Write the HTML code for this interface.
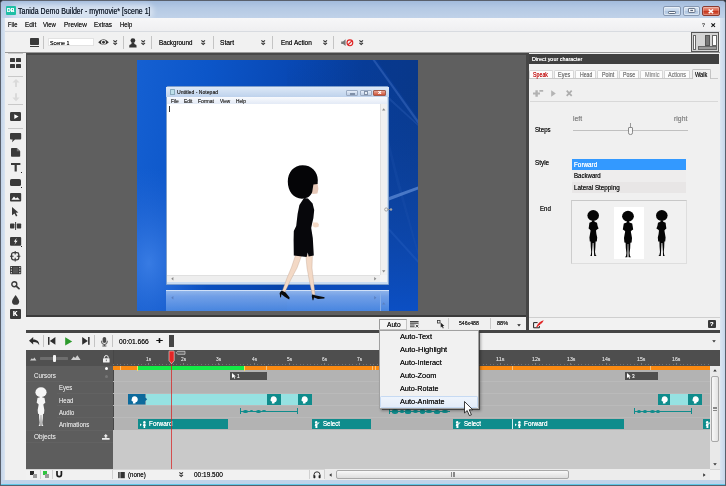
<!DOCTYPE html>
<html><head><meta charset="utf-8"><title>Tanida Demo Builder</title>
<style>
*{box-sizing:border-box;margin:0;padding:0}
html,body{width:726px;height:486px;overflow:hidden;background:#2e333b}
body{font-family:"Liberation Sans",sans-serif;font-size:8px;color:#222;position:relative}
.a{position:absolute;display:block}
.t{position:absolute;white-space:nowrap;line-height:1.15;display:block;transform-origin:0 0;text-shadow:0 0 0.4px currentColor}
svg{overflow:visible}
#w{position:absolute;left:0;top:0;width:726px;height:486px;will-change:transform}
</style></head><body><div id="w">
<div class="a" style="left:0.00px;top:0.00px;width:726.00px;height:486.00px;background:#c3d4e8;border:1px solid #59606c;border-radius:4px 4px 0 0"></div>
<div class="a" style="left:1.00px;top:1.00px;width:724.00px;height:17.00px;background:linear-gradient(#a2bbdc,#b4c9e4 40%,#c0d2e9);border-radius:3px 3px 0 0"></div>
<div class="a" style="left:14.00px;top:7.50px;width:136.00px;height:7.00px;background:rgba(255,255,255,0.42);border-radius:4px;box-shadow:0 0 5px 4px rgba(255,255,255,0.42)"></div>
<div class="a" style="left:1.00px;top:18.00px;width:4.00px;height:467.00px;background:linear-gradient(90deg,#c2d3e8,#d9e4f1);"></div>
<div class="a" style="left:720.00px;top:18.00px;width:5.00px;height:467.00px;background:linear-gradient(90deg,#dbe6f2,#c6d6ea);"></div>
<div class="a" style="left:1.00px;top:480.00px;width:724.00px;height:4.50px;background:#bfd3ea;"></div>
<div class="a" style="left:1.00px;top:484.30px;width:724.00px;height:0.90px;background:#5fc8e8;"></div>
<div class="a" style="left:5.00px;top:18.00px;width:715.00px;height:462.00px;background:#f0f0f0;"></div>
<div class="a" style="left:6.00px;top:6.20px;width:9.80px;height:9.10px;background:#1fbfa5;border-radius:1px"></div>
<span class="t" style="left:7.20px;top:7.77px;font-size:5.20px;transform:scaleX(0.9853);color:#fff;font-weight:bold;">DB</span>
<span class="t" style="left:18.30px;top:6.72px;font-size:8.20px;transform:scaleX(0.8564);color:#1e2836;">Tanida Demo Builder - mymovie* [scene 1]</span>
<div class="a" style="left:663.30px;top:6.20px;width:17.90px;height:9.50px;background:linear-gradient(#d9e5f3,#c3d5ea 48%,#b0c6e1 52%,#c0d3e9);border:0.7px solid #8698b2;border-radius:2px;box-shadow:inset 0 0 0 0.7px rgba(255,255,255,0.6)"></div>
<div class="a" style="left:668.20px;top:10.80px;width:7.80px;height:2.90px;background:#fff;border:0.8px solid #5a6a80;border-radius:1.2px"></div>
<div class="a" style="left:682.60px;top:6.20px;width:17.70px;height:9.50px;background:linear-gradient(#d9e5f3,#c3d5ea 48%,#b0c6e1 52%,#c0d3e9);border:0.7px solid #8698b2;border-radius:2px;box-shadow:inset 0 0 0 0.7px rgba(255,255,255,0.6)"></div>
<svg class="a" style="left:687.80px;top:8.30px;" width="7.4" height="4.9" viewBox="0 0 7.4 4.9"><rect x="0.45" y="0.45" width="6.5" height="4" rx="0.6" fill="#fff" stroke="#56657c" stroke-width="0.9"/><rect x="2.3" y="1.8" width="2.8" height="1.3" fill="#56657c"/></svg>
<div class="a" style="left:702.00px;top:6.20px;width:17.90px;height:9.50px;background:linear-gradient(#eaa190,#d9604a 45%,#c5341c 52%,#d8674c);border:0.7px solid #8a3a30;border-radius:2px;box-shadow:inset 0 0 0 0.7px rgba(255,255,255,0.35)"></div>
<svg class="a" style="left:708.00px;top:8.60px;" width="5.8" height="4.6" viewBox="0 0 5.8 4.6"><path d="M0.7 0.5 L5.1 4.1 M5.1 0.5 L0.7 4.1" stroke="#fff" stroke-width="1.5"/></svg>
<div class="a" style="left:5.00px;top:18.00px;width:715.00px;height:13.20px;background:linear-gradient(#f7f7f8,#efeff1);"></div>
<div class="a" style="left:5.00px;top:31.20px;width:715.00px;height:0.80px;background:#d8dbe0;"></div>
<span class="t" style="left:7.90px;top:21.45px;font-size:6.70px;transform:scaleX(0.8799);color:#2c2c2c;">File</span>
<span class="t" style="left:24.80px;top:21.45px;font-size:6.70px;transform:scaleX(0.9701);color:#2c2c2c;">Edit</span>
<span class="t" style="left:43.40px;top:21.45px;font-size:6.70px;transform:scaleX(0.8888);color:#2c2c2c;">View</span>
<span class="t" style="left:63.70px;top:21.45px;font-size:6.70px;transform:scaleX(0.9568);color:#2c2c2c;">Preview</span>
<span class="t" style="left:94.00px;top:21.45px;font-size:6.70px;transform:scaleX(0.9480);color:#2c2c2c;">Extras</span>
<span class="t" style="left:119.80px;top:21.45px;font-size:6.70px;transform:scaleX(0.8853);color:#2c2c2c;">Help</span>
<span class="t" style="left:701.80px;top:20.95px;font-size:6.20px;transform:scaleX(0.7921);color:#666;font-weight:bold;">?</span>
<svg class="a" style="left:711.00px;top:23.00px;" width="4.4" height="4.2" viewBox="0 0 4.4 4.2"><path d="M0.4 0.4 L4 3.8 M4 0.4 L0.4 3.8" stroke="#111" stroke-width="1.1"/></svg>
<div class="a" style="left:5.00px;top:32.00px;width:715.00px;height:20.60px;background:#f1f1f1;"></div>
<div class="a" style="left:5.00px;top:52.40px;width:715.00px;height:1.00px;background:#9a9a9a;"></div>
<div class="a" style="left:29.60px;top:37.60px;width:9.20px;height:7.00px;background:#3a3a3a;border-radius:0.8px"></div>
<div class="a" style="left:29.60px;top:45.80px;width:9.20px;height:1.10px;background:#3a3a3a;"></div>
<div class="a" style="left:42.70px;top:36.00px;width:0.80px;height:13.00px;background:#c4c4c4;"></div>
<div class="a" style="left:122.90px;top:36.00px;width:0.80px;height:13.00px;background:#c4c4c4;"></div>
<div class="a" style="left:150.60px;top:36.00px;width:0.80px;height:13.00px;background:#c4c4c4;"></div>
<div class="a" style="left:212.50px;top:36.00px;width:0.80px;height:13.00px;background:#c4c4c4;"></div>
<div class="a" style="left:272.40px;top:36.00px;width:0.80px;height:13.00px;background:#c4c4c4;"></div>
<div class="a" style="left:333.30px;top:36.00px;width:0.80px;height:13.00px;background:#c4c4c4;"></div>
<div class="a" style="left:47.60px;top:38.40px;width:46.90px;height:7.80px;background:#fff;border:1px solid #e2e2e2"></div>
<span class="t" style="left:49.60px;top:38.55px;font-size:6.20px;transform:scaleX(0.8527);color:#222;">Scene 1</span>
<svg class="a" style="left:97.50px;top:38.30px;" width="11" height="8.4" viewBox="0 0 11 8.4"><path d="M0.2 4.2 Q5.5 -1.6 10.8 4.2 Q5.5 10 0.2 4.2Z" fill="#333"/><circle cx="5.5" cy="4.2" r="2.5" fill="#f1f1f1"/><circle cx="5.5" cy="4.2" r="1.5" fill="#333"/></svg>
<svg class="a" style="left:113.10px;top:40.40px;" width="4.4" height="5.2" viewBox="0 0 4.4 5.2"><path d="M0.4 0.4 L2.2 2 L4 0.4 M0.4 2.9 L2.2 4.5 L4 2.9" stroke="#333" stroke-width="1.1" fill="none"/></svg>
<svg class="a" style="left:140.70px;top:40.40px;" width="4.4" height="5.2" viewBox="0 0 4.4 5.2"><path d="M0.4 0.4 L2.2 2 L4 0.4 M0.4 2.9 L2.2 4.5 L4 2.9" stroke="#333" stroke-width="1.1" fill="none"/></svg>
<svg class="a" style="left:200.50px;top:40.40px;" width="4.4" height="5.2" viewBox="0 0 4.4 5.2"><path d="M0.4 0.4 L2.2 2 L4 0.4 M0.4 2.9 L2.2 4.5 L4 2.9" stroke="#333" stroke-width="1.1" fill="none"/></svg>
<svg class="a" style="left:261.20px;top:40.40px;" width="4.4" height="5.2" viewBox="0 0 4.4 5.2"><path d="M0.4 0.4 L2.2 2 L4 0.4 M0.4 2.9 L2.2 4.5 L4 2.9" stroke="#333" stroke-width="1.1" fill="none"/></svg>
<svg class="a" style="left:322.50px;top:40.40px;" width="4.4" height="5.2" viewBox="0 0 4.4 5.2"><path d="M0.4 0.4 L2.2 2 L4 0.4 M0.4 2.9 L2.2 4.5 L4 2.9" stroke="#333" stroke-width="1.1" fill="none"/></svg>
<svg class="a" style="left:359.30px;top:40.40px;" width="4.4" height="5.2" viewBox="0 0 4.4 5.2"><path d="M0.4 0.4 L2.2 2 L4 0.4 M0.4 2.9 L2.2 4.5 L4 2.9" stroke="#333" stroke-width="1.1" fill="none"/></svg>
<svg class="a" style="left:129.00px;top:37.60px;" width="7.8" height="9.6" viewBox="0 0 7.8 9.6"><circle cx="3.9" cy="2.6" r="2.4" fill="#333"/><path d="M2.6 4.6 L5.2 4.6 L5.4 6 L7.4 7 L7.6 9.4 L0.2 9.4 L0.4 7 L2.4 6Z" fill="#333"/></svg>
<span class="t" style="left:158.80px;top:38.97px;font-size:6.60px;transform:scaleX(0.9510);color:#222;">Background</span>
<span class="t" style="left:219.80px;top:38.97px;font-size:6.60px;transform:scaleX(1.0188);color:#222;">Start</span>
<span class="t" style="left:280.60px;top:38.97px;font-size:6.60px;transform:scaleX(0.9760);color:#222;">End Action</span>
<svg class="a" style="left:341.20px;top:39.20px;" width="12.5" height="7.4" viewBox="0 0 12.5 7.4"><path d="M0.2 2.4 L2 2.4 L4.6 0.3 L4.6 7.1 L2 5 L0.2 5Z" fill="#777"/><circle cx="8.9" cy="3.8" r="2.9" fill="none" stroke="#e02020" stroke-width="1.1"/><path d="M6.9 5.8 L10.9 1.8" stroke="#e02020" stroke-width="1.1"/></svg>
<div class="a" style="left:690.60px;top:32.40px;width:28.40px;height:19.80px;background:#d4d4d4;border:1px solid #555"></div>
<div class="a" style="left:692.60px;top:34.60px;width:3.80px;height:15.40px;background:#fff;border:0.5px solid #666"></div>
<div class="a" style="left:698.00px;top:45.60px;width:19.00px;height:4.40px;background:#9a9a9a;border:0.5px solid #666"></div>
<div class="a" style="left:704.60px;top:34.60px;width:5.00px;height:11.00px;background:#777;border:0.5px solid #555"></div>
<div class="a" style="left:711.60px;top:34.60px;width:5.00px;height:11.00px;background:#fff;border:0.5px solid #666"></div>
<div class="a" style="left:8.00px;top:53.20px;width:14.50px;height:0.80px;background:#c8c8c8;"></div>
<div class="a" style="left:8.00px;top:75.50px;width:14.50px;height:0.80px;background:#c8c8c8;"></div>
<div class="a" style="left:8.00px;top:103.60px;width:14.50px;height:0.80px;background:#c8c8c8;"></div>
<div class="a" style="left:8.00px;top:128.30px;width:14.50px;height:0.80px;background:#c8c8c8;"></div>
<div class="a" style="left:9.60px;top:57.80px;width:5.30px;height:4.40px;background:#3a3a3a;border-radius:0.6px"></div>
<div class="a" style="left:16.00px;top:57.80px;width:5.30px;height:4.40px;background:#3a3a3a;border-radius:0.6px"></div>
<div class="a" style="left:9.60px;top:64.00px;width:5.30px;height:4.40px;background:#3a3a3a;border-radius:0.6px"></div>
<div class="a" style="left:16.00px;top:64.00px;width:5.30px;height:4.40px;background:#3a3a3a;border-radius:0.6px"></div>
<svg class="a" style="left:11.50px;top:78.60px;" width="8" height="8.2" viewBox="0 0 8 8.2"><path d="M4 0 L7.6 3.6 L5 3.6 L5 8 L3 8 L3 3.6 L0.4 3.6Z" fill="#dadada"/></svg>
<svg class="a" style="left:11.50px;top:92.80px;" width="8" height="8.2" viewBox="0 0 8 8.2"><path d="M4 8.2 L7.6 4.6 L5 4.6 L5 0.2 L3 0.2 L3 4.6 L0.4 4.6Z" fill="#dadada"/></svg>
<div class="a" style="left:9.70px;top:112.00px;width:11.60px;height:9.10px;background:#3a3a3a;border-radius:1.2px"></div>
<svg class="a" style="left:13.60px;top:114.00px;" width="5" height="5.2" viewBox="0 0 5 5.2"><path d="M0.3 0.2 L4.6 2.6 L0.3 5Z" fill="#fff"/></svg>
<svg class="a" style="left:10.00px;top:133.20px;" width="11.2" height="9.4" viewBox="0 0 11.2 9.4"><path d="M1 0 H10.2 Q11.2 0 11.2 1 V5.4 Q11.2 6.4 10.2 6.4 H5 L2 9.2 L2.6 6.4 H1 Q0 6.4 0 5.4 V1 Q0 0 1 0Z" fill="#3a3a3a"/></svg>
<svg class="a" style="left:11.00px;top:148.00px;" width="9.2" height="8.8" viewBox="0 0 9.2 8.8"><path d="M0.8 0 H5.8 L9.2 3.2 V8 Q9.2 8.8 8.4 8.8 H0.8 Q0 8.8 0 8 V0.8 Q0 0 0.8 0Z" fill="#3a3a3a"/><path d="M5.8 0 L5.8 3.2 L9.2 3.2" fill="#777"/></svg>
<svg class="a" style="left:11.00px;top:163.20px;" width="9.4" height="8.6" viewBox="0 0 9.4 8.6"><path d="M0 0 H9.4 V1.9 H5.8 V8.6 H3.6 V1.9 H0Z" fill="#3a3a3a"/></svg>
<div class="a" style="left:20.60px;top:171.60px;width:1.20px;height:1.20px;background:#222;"></div>
<div class="a" style="left:10.00px;top:178.50px;width:11.20px;height:7.70px;background:#3a3a3a;border-radius:1.6px"></div>
<div class="a" style="left:20.60px;top:187.00px;width:1.20px;height:1.20px;background:#222;"></div>
<svg class="a" style="left:10.00px;top:192.50px;" width="11.2" height="8.5" viewBox="0 0 11.2 8.5"><rect x="0" y="0" width="11.2" height="8.5" rx="1" fill="#3a3a3a"/><path d="M1.4 6.8 L4 3.6 L5.8 5.4 L7.4 4.2 L9.8 6.8Z" fill="#fff"/></svg>
<svg class="a" style="left:12.00px;top:207.40px;" width="6.6" height="9.4" viewBox="0 0 6.6 9.4"><path d="M0 0 L6.4 5.6 L3.8 5.8 L5.4 8.8 L4 9.4 L2.5 6.4 L0 8.2Z" fill="#3a3a3a"/></svg>
<svg class="a" style="left:10.00px;top:222.20px;" width="11.2" height="8" viewBox="0 0 11.2 8"><rect x="0" y="1.4" width="4.4" height="5.2" rx="0.8" fill="#3a3a3a"/><rect x="6.8" y="1.4" width="4.4" height="5.2" rx="0.8" fill="#3a3a3a"/><rect x="5.1" y="0" width="1" height="8" fill="#3a3a3a"/></svg>
<svg class="a" style="left:10.00px;top:236.60px;" width="11.2" height="8.8" viewBox="0 0 11.2 8.8"><rect x="0" y="0" width="11.2" height="8.8" rx="1" fill="#3a3a3a"/><path d="M6.6 1 L3.8 4.8 L5.6 4.8 L4.4 7.8 L7.6 3.8 L5.8 3.8Z" fill="#fff"/></svg>
<div class="a" style="left:20.60px;top:246.00px;width:1.20px;height:1.20px;background:#222;"></div>
<svg class="a" style="left:10.40px;top:250.60px;" width="10.4" height="10.4" viewBox="0 0 10.4 10.4"><rect x="1.6" y="1.6" width="7.2" height="7.2" rx="1.8" fill="none" stroke="#3a3a3a" stroke-width="1.3"/><path d="M5.2 0 V3.6 M5.2 6.8 V10.4 M0 5.2 H3.6 M6.8 5.2 H10.4" stroke="#3a3a3a" stroke-width="1.1"/></svg>
<svg class="a" style="left:10.00px;top:265.90px;" width="11.2" height="8.2" viewBox="0 0 11.2 8.2"><rect x="0" y="0" width="11.2" height="8.2" rx="0.8" fill="#3a3a3a"/><g fill="#ddd"><rect x="0.8" y="0.9" width="1.2" height="1.2"/><rect x="0.8" y="3.5" width="1.2" height="1.2"/><rect x="0.8" y="6.1" width="1.2" height="1.2"/><rect x="9.2" y="0.9" width="1.2" height="1.2"/><rect x="9.2" y="3.5" width="1.2" height="1.2"/><rect x="9.2" y="6.1" width="1.2" height="1.2"/></g><rect x="3" y="0.9" width="5.2" height="6.4" fill="#555"/></svg>
<svg class="a" style="left:11.00px;top:281.20px;" width="8.8" height="8.2" viewBox="0 0 8.8 8.2"><circle cx="3.3" cy="3.3" r="2.5" fill="none" stroke="#3a3a3a" stroke-width="1.4"/><path d="M5.2 5.2 L8 7.6" stroke="#3a3a3a" stroke-width="1.8" stroke-linecap="round"/></svg>
<svg class="a" style="left:12.00px;top:295.00px;" width="7.2" height="9.8" viewBox="0 0 7.2 9.8"><path d="M3.6 0 Q7.2 5 7.2 6.4 A3.6 3.4 0 0 1 0 6.4 Q0 5 3.6 0Z" fill="#3a3a3a"/></svg>
<div class="a" style="left:10.20px;top:309.20px;width:10.50px;height:9.80px;background:#3a3a3a;border-radius:1px"></div>
<span class="t" style="left:13.20px;top:310.21px;font-size:6.40px;transform:scaleX(0.9952);color:#fff;font-weight:bold;">K</span>
<div class="a" style="left:25.60px;top:53.40px;width:500.40px;height:263.60px;background:#5f5f5f;"></div>
<div class="a" style="left:25.60px;top:53.40px;width:500.40px;height:1.40px;background:#484848;"></div>
<div class="a" style="left:25.60px;top:53.40px;width:1.60px;height:263.60px;background:#4c4c4c;"></div>
<div class="a" style="left:25.60px;top:314.50px;width:500.40px;height:2.50px;background:#3b3b3b;"></div>
<div class="a" style="left:137.2px;top:60.3px;width:280.6px;height:250.4px;overflow:hidden;background:linear-gradient(100deg,#1560d2 0%,#0c56c9 22%,#0848b4 48%,#073c98 70%,#0a3a8c 100%)">
<svg class="a" style="left:0;top:0" width="281" height="251" viewBox="0 0 281 251"><defs><linearGradient id="g1" x1="0" y1="0" x2="0" y2="1"><stop offset="0" stop-color="#0a3a8c" stop-opacity="0.0"/><stop offset="0.55" stop-color="#0f49ae" stop-opacity="0.5"/><stop offset="1" stop-color="#0b4fc4" stop-opacity="1"/></linearGradient><radialGradient id="g2" cx="0.1" cy="0.75" r="0.5"><stop offset="0" stop-color="#3c7fe6" stop-opacity="0.9"/><stop offset="1" stop-color="#2a6ad8" stop-opacity="0"/></radialGradient></defs><rect x="0" y="60" width="120" height="191" fill="url(#g2)"/><rect x="150" y="0" width="131" height="251" fill="url(#g1)"/><path d="M238 0 L281 60 L281 64 L235.5 0Z" fill="#4a78cc" opacity="0.4"/><path d="M252 37 L281 64 L281 66 L252 40Z" fill="#3f6fc6" opacity="0.25"/><path d="M240 0 L281 0 L281 58Z" fill="#082f78" opacity="0.25"/><path d="M238 26 L262 120 L281 190 L281 196 L260 124 L236 26Z" fill="#2758b4" opacity="0.2"/><path d="M252 137 L281 126.5 L281 129.5 L252 140.5Z" fill="#7aa4e8" opacity="0.55"/><path d="M252 168 L281 200 L281 203 L252 171Z" fill="#2f66c8" opacity="0.3"/></svg>
</div>
<div class="a" style="left:165.50px;top:86.20px;width:223.80px;height:198.50px;background:#c9dcf2;border:0.6px solid #7f9fcb;border-radius:2px 2px 0 0"></div>
<div class="a" style="left:166.00px;top:86.80px;width:222.80px;height:10.20px;background:linear-gradient(#dde9f7,#bed2ec);"></div>
<div class="a" style="left:167.40px;top:97.00px;width:220.00px;height:7.40px;background:linear-gradient(#f8fafd,#e3eaf6);"></div>
<div class="a" style="left:167.40px;top:104.40px;width:220.00px;height:178.00px;background:#fff;"></div>
<div class="a" style="left:379.60px;top:104.40px;width:7.80px;height:178.00px;background:#f0f0f0;border-left:0.5px solid #e0e0e0"></div>
<div class="a" style="left:167.40px;top:275.00px;width:212.60px;height:7.40px;background:#eeeeee;border-top:0.5px solid #e0e0e0"></div>
<div class="a" style="left:379.60px;top:275.00px;width:7.80px;height:7.40px;background:#f4f4f4;"></div>
<span class="t" style="left:176.80px;top:89.87px;font-size:5.20px;transform:scaleX(0.9830);color:#333;">Untitled - Notepad</span>
<div class="a" style="left:170.40px;top:89.40px;width:4.20px;height:5.60px;background:#bfe0ea;border:0.4px solid #8ab;border-radius:0.5px"></div>
<span class="t" style="left:170.60px;top:98.66px;font-size:4.80px;transform:scaleX(1.0084);color:#3a3a3a;">File</span>
<span class="t" style="left:184.00px;top:98.66px;font-size:4.80px;transform:scaleX(1.0156);color:#3a3a3a;">Edit</span>
<span class="t" style="left:198.00px;top:98.66px;font-size:4.80px;transform:scaleX(1.0525);color:#3a3a3a;">Format</span>
<span class="t" style="left:219.60px;top:98.66px;font-size:4.80px;transform:scaleX(0.9886);color:#3a3a3a;">View</span>
<span class="t" style="left:235.60px;top:98.66px;font-size:4.80px;transform:scaleX(1.0129);color:#3a3a3a;">Help</span>
<div class="a" style="left:169.20px;top:106.40px;width:0.40px;height:5.20px;background:#333;"></div>
<div class="a" style="left:346.00px;top:89.70px;width:12.40px;height:6.30px;background:linear-gradient(#e6eef9,#bccde5);border:0.5px solid #9aaac2;border-radius:1px"></div>
<div class="a" style="left:350.00px;top:93.00px;width:4.60px;height:1.80px;background:#f4f6fa;border:0.4px solid #8090a8"></div>
<div class="a" style="left:359.60px;top:89.70px;width:12.40px;height:6.30px;background:linear-gradient(#e6eef9,#bccde5);border:0.5px solid #9aaac2;border-radius:1px"></div>
<div class="a" style="left:363.60px;top:91.40px;width:4.40px;height:3.40px;background:#e8eef6;border:0.6px solid #8090a8"></div>
<div class="a" style="left:373.00px;top:89.70px;width:13.00px;height:6.30px;background:linear-gradient(#eaa897,#cf5238);border:0.5px solid #a05a4c;border-radius:1px"></div>
<span class="t" style="left:378.00px;top:89.52px;font-size:5.00px;transform:scaleX(1.2226);color:#fff;font-weight:bold;">x</span>
<svg class="a" style="left:381.60px;top:108.00px;" width="3.4" height="2.6" viewBox="0 0 3.4 2.6"><path d="M0 2.4 L1.7 0.2 L3.4 2.4Z" fill="#8a8a8a"/></svg>
<svg class="a" style="left:381.60px;top:270.00px;" width="3.4" height="2.6" viewBox="0 0 3.4 2.6"><path d="M0 0.2 L1.7 2.4 L3.4 0.2Z" fill="#8a8a8a"/></svg>
<svg class="a" style="left:170.60px;top:277.40px;" width="2.6" height="3.4" viewBox="0 0 2.6 3.4"><path d="M2.4 0 L0.2 1.7 L2.4 3.4Z" fill="#8a8a8a"/></svg>
<svg class="a" style="left:374.00px;top:277.40px;" width="2.6" height="3.4" viewBox="0 0 2.6 3.4"><path d="M0.2 0 L2.4 1.7 L0.2 3.4Z" fill="#8a8a8a"/></svg>
<div class="a" style="left:165.50px;top:289.50px;width:223.80px;height:21.20px;background:linear-gradient(#9fc0ee,#7aa6ea 30%,#4d8ae2 100%);opacity:0.92"></div>
<div class="a" style="left:165.50px;top:289.50px;width:223.80px;height:0.80px;background:#cfe0f8;"></div>
<div class="a" style="left:379.60px;top:291.00px;width:0.60px;height:19.70px;background:#86aee8;"></div>
<svg class="a" style="left:170.60px;top:295.60px;" width="2.6" height="3.4" viewBox="0 0 2.6 3.4"><path d="M2.4 0 L0.2 1.7 L2.4 3.4Z" fill="#5b80c0"/></svg>
<svg class="a" style="left:374.00px;top:295.60px;" width="2.6" height="3.4" viewBox="0 0 2.6 3.4"><path d="M0.2 0 L2.4 1.7 L0.2 3.4Z" fill="#5b80c0"/></svg>
<svg class="a" style="left:381.60px;top:302.00px;" width="3.4" height="2.6" viewBox="0 0 3.4 2.6"><path d="M0 2.4 L1.7 0.2 L3.4 2.4Z" fill="#5b80c0"/></svg>
<svg class="a" style="left:383.50px;top:206.60px;" width="9" height="5" viewBox="0 0 9 5"><circle cx="2.2" cy="2.5" r="1.6" fill="none" stroke="#888" stroke-width="0.7"/><path d="M3.8 2.5 H8.4" stroke="#888" stroke-width="0.9"/><rect x="6.2" y="1.3" width="1.6" height="2.4" fill="#aaa"/></svg>
<svg class="a" style="left:270px;top:155px" width="70" height="150" viewBox="270 155 70 150"><path d="M295.6 255 L301.6 255.6 L297 268 L290.6 280 L285 292 L282.2 291.4 L286.6 279 L291.6 267Z" fill="#f3d9c6" stroke="#b99a86" stroke-width="0.35"/><path d="M305.8 255 L312.4 255 L312 268 L313.6 282 L315 294.6 L312.4 295 L309.6 282 L307 268Z" fill="#f3d9c6" stroke="#b99a86" stroke-width="0.35"/><path d="M281.6 290.6 L285.6 292.4 L289.6 297.6 L289.2 299.6 L285 297 L281.4 294.2 L281 297.4 L280.2 297.2 L279.6 293Z" fill="#0a0a0a"/><path d="M312 294.6 L316 295.4 L321 296.4 L324.6 297.2 L324.4 298.6 L318 299 L314 297.6 L313.4 300.2 L312.6 300.2 L311.8 296.6Z" fill="#0a0a0a"/><path d="M304 198 L308 198.4 L312.6 203.6 L314.2 210 L313.4 218 L312 224 L311.2 228 L312.8 238 L313.8 255.6 L308.6 256.4 L307.8 252.6 L306.6 257 L293.8 255.4 L293.6 240 L293.8 231 L296.2 226 L297.6 214 L299.4 205 Z" fill="#07070b"/><path d="M313 222.4 L317.4 222.6 L319 224.6 L318.4 227 L315 227.4 L312.6 226Z" fill="#f3d9c6"/><path d="M311 182 L317.6 183.6 L318.4 189 L317.4 193.4 L313 194 L310 192Z" fill="#e6c8b8"/><path d="M302.6 165.2 C311.5 165.2 317.8 171.5 317.8 180 L317.6 184 L313.4 184.6 L312.2 192 C310.5 196.8 306.5 198.7 302 198.7 C293.5 198.7 287.8 191.2 287.8 181.6 C287.8 172 294 165.2 302.6 165.2Z" fill="#050507"/></svg>
<div class="a" style="left:526.00px;top:53.40px;width:2.60px;height:279.20px;background:#454545;"></div>
<div class="a" style="left:528.60px;top:53.40px;width:191.40px;height:276.80px;background:#f0f0f0;"></div>
<div class="a" style="left:528.60px;top:54.20px;width:190.60px;height:9.40px;background:#404040;"></div>
<span class="t" style="left:532.40px;top:55.05px;font-size:6.20px;transform:scaleX(0.8759);color:#fff;">Direct your character</span>
<div class="a" style="left:529.00px;top:78.10px;width:189.40px;height:0.60px;background:#c9c9c9;"></div>
<div class="a" style="left:529.40px;top:69.90px;width:23.60px;height:8.50px;background:#fdfdfd;border:1px solid #d6d6d6;border-bottom:none;border-radius:1.5px 1.5px 0 0"></div>
<span class="t" style="left:533.00px;top:70.59px;font-size:6.50px;transform:scaleX(0.8138);color:#c62020;">Speak</span>
<div class="a" style="left:554.00px;top:69.90px;width:20.40px;height:8.50px;background:#fdfdfd;border:1px solid #d6d6d6;border-bottom:none;border-radius:1.5px 1.5px 0 0"></div>
<span class="t" style="left:558.00px;top:70.59px;font-size:6.50px;transform:scaleX(0.8581);color:#7c7c7c;">Eyes</span>
<div class="a" style="left:575.20px;top:69.90px;width:21.20px;height:8.50px;background:#fdfdfd;border:1px solid #d6d6d6;border-bottom:none;border-radius:1.5px 1.5px 0 0"></div>
<span class="t" style="left:579.70px;top:70.59px;font-size:6.50px;transform:scaleX(0.7915);color:#7c7c7c;">Head</span>
<div class="a" style="left:597.40px;top:69.90px;width:20.80px;height:8.50px;background:#fdfdfd;border:1px solid #d6d6d6;border-bottom:none;border-radius:1.5px 1.5px 0 0"></div>
<span class="t" style="left:601.80px;top:70.59px;font-size:6.50px;transform:scaleX(0.8234);color:#7c7c7c;">Point</span>
<div class="a" style="left:619.20px;top:69.90px;width:20.20px;height:8.50px;background:#fdfdfd;border:1px solid #d6d6d6;border-bottom:none;border-radius:1.5px 1.5px 0 0"></div>
<span class="t" style="left:623.20px;top:70.59px;font-size:6.50px;transform:scaleX(0.8167);color:#7c7c7c;">Pose</span>
<div class="a" style="left:640.40px;top:69.90px;width:22.60px;height:8.50px;background:#fdfdfd;border:1px solid #d6d6d6;border-bottom:none;border-radius:1.5px 1.5px 0 0"></div>
<span class="t" style="left:644.50px;top:70.59px;font-size:6.50px;transform:scaleX(0.8545);color:#9a9a9a;">Mimic</span>
<div class="a" style="left:664.00px;top:69.90px;width:26.40px;height:8.50px;background:#fdfdfd;border:1px solid #d6d6d6;border-bottom:none;border-radius:1.5px 1.5px 0 0"></div>
<span class="t" style="left:668.40px;top:70.59px;font-size:6.50px;transform:scaleX(0.8397);color:#8a8a8a;">Actions</span>
<div class="a" style="left:691.80px;top:69.20px;width:19.20px;height:9.80px;background:#f0f0f0;border:0.6px solid #c4c4c4;border-bottom:none;border-radius:1.5px 1.5px 0 0"></div>
<span class="t" style="left:695.00px;top:70.61px;font-size:6.40px;transform:scaleX(0.8795);color:#2a2a2a;">Walk</span>
<svg class="a" style="left:533.00px;top:90.00px;" width="10.4" height="6.8" viewBox="0 0 10.4 6.8"><path d="M0 2.4 H2.4 V0.2 H4.8 V2.4 H7 V4.6 H4.8 V6.8 H2.4 V4.6 H0Z M6.4 0 H10.2 V1.7 H6.4Z" fill="#b2b2b2"/></svg>
<svg class="a" style="left:551.20px;top:90.00px;" width="5" height="7" viewBox="0 0 5 7"><path d="M0.2 0.2 L4.8 3.5 L0.2 6.8Z" fill="#b4b4b4"/></svg>
<svg class="a" style="left:565.80px;top:90.20px;" width="6.4" height="6.5" viewBox="0 0 6.4 6.5"><path d="M0.7 0.7 L5.7 5.8 M5.7 0.7 L0.7 5.8" stroke="#adadad" stroke-width="1.7"/></svg>
<div class="a" style="left:530.00px;top:100.60px;width:188.40px;height:1.20px;background:#d8d8d8;"></div>
<span class="t" style="left:573.30px;top:115.37px;font-size:6.60px;transform:scaleX(1.0449);color:#8a8a8a;">left</span>
<span class="t" style="left:673.60px;top:115.37px;font-size:6.60px;transform:scaleX(1.0436);color:#8a8a8a;">right</span>
<span class="t" style="left:535.30px;top:126.27px;font-size:6.60px;transform:scaleX(0.9302);color:#222;">Steps</span>
<div class="a" style="left:573.30px;top:130.30px;width:114.70px;height:0.80px;background:#c0c0c0;"></div>
<div class="a" style="left:630.10px;top:122.60px;width:0.60px;height:5.00px;background:#999;"></div>
<div class="a" style="left:628.10px;top:127.20px;width:4.70px;height:7.80px;background:#f6f6f6;border:0.7px solid #8a8a8a;border-radius:1px 1px 2.2px 2.2px"></div>
<span class="t" style="left:535.30px;top:158.67px;font-size:6.60px;transform:scaleX(0.9609);color:#222;">Style</span>
<div class="a" style="left:571.90px;top:158.90px;width:114.40px;height:11.00px;background:#3399ff;"></div>
<div class="a" style="left:571.90px;top:169.90px;width:114.40px;height:12.10px;background:#eeeded;"></div>
<div class="a" style="left:571.90px;top:182.00px;width:114.40px;height:11.30px;background:#e8e6e6;"></div>
<span class="t" style="left:573.90px;top:160.81px;font-size:6.40px;transform:scaleX(0.9926);color:#fff;">Forward</span>
<span class="t" style="left:573.90px;top:172.41px;font-size:6.40px;transform:scaleX(0.9537);color:#222;">Backward</span>
<span class="t" style="left:573.60px;top:184.31px;font-size:6.40px;transform:scaleX(0.9804);color:#222;">Lateral Stepping</span>
<span class="t" style="left:540.40px;top:204.77px;font-size:6.60px;transform:scaleX(0.9281);color:#222;">End</span>
<div class="a" style="left:571.30px;top:200.20px;width:115.90px;height:63.40px;background:#f1f1f1;border:0.7px solid #dedede;border-top-color:#c8c8c8;border-left-color:#cdcdcd"></div>
<div class="a" style="left:613.80px;top:206.60px;width:29.80px;height:52.90px;background:#fff;"></div>
<svg class="a" style="left:580.6px;top:208px" width="24" height="52" viewBox="-12 0 24 52"><g transform="scale(1,1)"><ellipse cx="0.2" cy="7.4" rx="5.8" ry="5.3" fill="#050505"/><path d="M-0.8 12.2 L1.2 12.2 L1.6 13.8 L4 14.8 L4.6 18 L5.6 20.4 L4 21.6 L3 22.6 L3.4 26 L4.2 29.4 L3.8 33.4 L2.6 33.6 L2.4 39 L2 44 L2.6 47 L3.6 48 L1.2 48.1 L0.9 43 L0.5 35 L-0.3 35 L-0.9 43 L-1 48.1 L-2.8 48 L-2.2 47 L-1.8 44 L-2.2 39 L-2.4 33.6 L-3.2 33.4 L-3.6 29.4 L-3 26 L-2.4 22.6 L-3.2 21.6 L-4.4 20.4 L-4 18 L-3.6 14.8 L-1.2 13.8Z" fill="#050505"/></g></svg>
<svg class="a" style="left:615.5px;top:208px" width="24" height="52" viewBox="-12 0 24 52"><ellipse cx="0" cy="8.2" rx="5.9" ry="5.4" fill="#050505"/><path d="M-1 13 L1 13 L1.4 14.6 L4.2 15.6 L4.8 19 L5.2 21.4 L3.6 22.4 L2.8 23.4 L3.4 26.6 L4 30 L3.6 34.6 L2.4 34.8 L2.2 40 L1.6 45 L2 48 L3 49.2 L0.6 49.3 L0.5 44 L0.3 36 L-0.3 36 L-0.5 44 L-0.6 49.3 L-3 49.2 L-2 48 L-1.6 45 L-2.2 40 L-2.4 34.8 L-3.6 34.6 L-4 30 L-3.4 26.6 L-2.8 23.4 L-3.6 22.4 L-5.2 21.4 L-4.8 19 L-4.2 15.6 L-1.4 14.6Z" fill="#050505"/></svg>
<svg class="a" style="left:649.8px;top:208px" width="24" height="52" viewBox="-12 0 24 52"><g transform="scale(-1,1)"><ellipse cx="0.2" cy="7.4" rx="5.8" ry="5.3" fill="#050505"/><path d="M-0.8 12.2 L1.2 12.2 L1.6 13.8 L4 14.8 L4.6 18 L5.6 20.4 L4 21.6 L3 22.6 L3.4 26 L4.2 29.4 L3.8 33.4 L2.6 33.6 L2.4 39 L2 44 L2.6 47 L3.6 48 L1.2 48.1 L0.9 43 L0.5 35 L-0.3 35 L-0.9 43 L-1 48.1 L-2.8 48 L-2.2 47 L-1.8 44 L-2.2 39 L-2.4 33.6 L-3.2 33.4 L-3.6 29.4 L-3 26 L-2.4 22.6 L-3.2 21.6 L-4.4 20.4 L-4 18 L-3.6 14.8 L-1.2 13.8Z" fill="#050505"/></g></svg>
<div class="a" style="left:528.60px;top:316.80px;width:191.40px;height:0.70px;background:#cfcfcf;"></div>
<div class="a" style="left:528.60px;top:317.50px;width:191.40px;height:12.70px;background:#f2f2f2;"></div>
<svg class="a" style="left:532.60px;top:319.80px;" width="11.2" height="8.4" viewBox="0 0 11.2 8.4"><path d="M0.6 2.6 H4.6 M0.6 2.6 V7.8 H6.4 V6" stroke="#222" stroke-width="1" fill="none"/><path d="M10.8 0.2 C8 0.6 5 3 3.2 7 L4.2 7.4 C5.4 5.6 6.4 5 7.6 4.8 L7 4 C8.6 3.8 9.6 2.6 10.8 0.2Z" fill="#e02424"/></svg>
<div class="a" style="left:707.60px;top:319.80px;width:8.80px;height:8.60px;background:#3a3a3a;border-radius:1px"></div>
<span class="t" style="left:710.20px;top:320.90px;font-size:6.00px;transform:scaleX(0.9822);color:#fff;font-weight:bold;">?</span>
<div class="a" style="left:25.60px;top:330.20px;width:694.40px;height:2.40px;background:#454545;"></div>
<div class="a" style="left:25.60px;top:317.00px;width:500.40px;height:13.20px;background:#f0f0f0;"></div>
<div class="a" style="left:378.70px;top:319.20px;width:28.50px;height:11.00px;background:#f4f4f4;border:0.7px solid #c4c4c4;border-top-color:#9a9a9a;border-left-color:#9a9a9a"></div>
<span class="t" style="left:386.90px;top:320.69px;font-size:6.50px;transform:scaleX(1.0171);color:#222;">Auto</span>
<svg class="a" style="left:409.80px;top:320.60px;" width="9" height="6.6" viewBox="0 0 9 6.6"><path d="M0 0.6 H8.6 M0 2.3 H8.6 M0 4 H4.6 M0 5.7 H4.6" stroke="#444" stroke-width="1.1"/><path d="M5.8 3.8 L8.4 6.4 M8.4 3.8 L5.8 6.4" stroke="#333" stroke-width="0.9"/></svg>
<svg class="a" style="left:437.00px;top:320.40px;" width="8" height="8.6" viewBox="0 0 8 8.6"><rect x="0.4" y="0.4" width="2.6" height="2.6" fill="none" stroke="#333" stroke-width="0.8"/><path d="M3.6 2.6 L7.4 6 L5.8 6.1 L6.7 8 L5.9 8.4 L5 6.5 L3.8 7.6Z" fill="#222"/></svg>
<div class="a" style="left:447.90px;top:318.40px;width:0.70px;height:11.00px;background:#c8c8c8;"></div>
<span class="t" style="left:459.00px;top:320.44px;font-size:5.80px;transform:scaleX(0.8897);color:#222;">546x488</span>
<div class="a" style="left:490.20px;top:318.40px;width:0.70px;height:11.00px;background:#c8c8c8;"></div>
<span class="t" style="left:497.20px;top:320.44px;font-size:5.80px;transform:scaleX(0.9562);color:#222;">88%</span>
<svg class="a" style="left:517.20px;top:323.70px;" width="4" height="2.6" viewBox="0 0 4 2.6"><path d="M0.2 0.2 L2 2.4 L3.8 0.2Z" fill="#222"/></svg>
<div class="a" style="left:25.60px;top:332.60px;width:694.40px;height:16.90px;background:#f0f0f0;"></div>
<svg class="a" style="left:29.40px;top:337.20px;" width="10.6" height="8.4" viewBox="0 0 10.6 8.4"><path d="M4.2 0 L4.2 2.4 C8.4 2.4 10.4 4.6 10.2 8.2 C9.2 5.8 7.6 5 4.2 5 L4.2 7.4 L0 3.7Z" fill="#2e2e2e"/></svg>
<div class="a" style="left:43.20px;top:335.00px;width:0.80px;height:12.40px;background:#c4c4c4;"></div>
<div class="a" style="left:94.00px;top:335.00px;width:0.80px;height:12.40px;background:#c4c4c4;"></div>
<div class="a" style="left:111.90px;top:335.00px;width:0.80px;height:12.40px;background:#c4c4c4;"></div>
<svg class="a" style="left:48.00px;top:337.40px;" width="7.6" height="7.8" viewBox="0 0 7.6 7.8"><rect x="0" y="0" width="1.5" height="7.8" fill="#2e2e2e"/><path d="M7.4 0 L7.4 7.8 L1.8 3.9Z" fill="#2e2e2e"/></svg>
<svg class="a" style="left:65.40px;top:337.00px;" width="7.4" height="8.8" viewBox="0 0 7.4 8.8"><path d="M0.2 0.2 L7.2 4.4 L0.2 8.6Z" fill="#2c9a2c"/></svg>
<svg class="a" style="left:82.00px;top:337.40px;" width="7.6" height="7.8" viewBox="0 0 7.6 7.8"><rect x="6.1" y="0" width="1.5" height="7.8" fill="#2e2e2e"/><path d="M0.2 0 L0.2 7.8 L5.8 3.9Z" fill="#2e2e2e"/></svg>
<svg class="a" style="left:101.40px;top:336.80px;" width="6.8" height="9.4" viewBox="0 0 6.8 9.4"><rect x="1.6" y="0" width="3.6" height="6" rx="1.8" fill="#4a4a4a"/><path d="M0.5 3.8 V4.6 A2.9 2.9 0 0 0 6.3 4.6 V3.8 M3.4 7.6 V9 M1.4 9 H5.4" stroke="#4a4a4a" stroke-width="1" fill="none"/></svg>
<span class="t" style="left:119.20px;top:337.53px;font-size:6.30px;transform:scaleX(1.0632);color:#222;">00:01.666</span>
<span class="t" style="left:156.40px;top:335.32px;font-size:9.60px;transform:scaleX(1.2486);color:#111;font-weight:bold;">+</span>
<div class="a" style="left:168.90px;top:335.40px;width:4.90px;height:11.40px;background:#454545;"></div>
<svg class="a" style="left:711.80px;top:340.20px;" width="4" height="2.6" viewBox="0 0 4 2.6"><path d="M0.2 0.2 L2 2.4 L3.8 0.2Z" fill="#333"/></svg>
<div class="a" style="left:25.60px;top:349.50px;width:694.40px;height:119.30px;background:#b3b3b3;"></div>
<div class="a" style="left:25.60px;top:349.50px;width:694.40px;height:16.10px;background:#4e4e4e;"></div>
<div class="a" style="left:25.60px;top:365.60px;width:87.20px;height:103.20px;background:#5d5d5d;"></div>
<div class="a" style="left:25.60px;top:349.50px;width:87.20px;height:16.10px;background:#505050;"></div>
<div class="a" style="left:112.60px;top:349.50px;width:0.60px;height:119.30px;background:#474747;"></div>
<div class="a" style="left:113.20px;top:430.40px;width:596.60px;height:38.40px;background:#c9c9c9;"></div>
<div class="a" style="left:113.20px;top:381.25px;width:596.60px;height:0.70px;background:#bababa;"></div>
<div class="a" style="left:113.20px;top:393.05px;width:596.60px;height:0.70px;background:#bababa;"></div>
<div class="a" style="left:113.20px;top:405.45px;width:596.60px;height:0.70px;background:#bababa;"></div>
<div class="a" style="left:113.20px;top:417.25px;width:596.60px;height:0.70px;background:#bababa;"></div>
<div class="a" style="left:26.00px;top:381.05px;width:86.60px;height:0.70px;background:#626262;"></div>
<div class="a" style="left:57.00px;top:393.05px;width:55.60px;height:0.70px;background:#626262;"></div>
<div class="a" style="left:57.00px;top:405.25px;width:55.60px;height:0.70px;background:#626262;"></div>
<div class="a" style="left:57.00px;top:417.25px;width:55.60px;height:0.70px;background:#626262;"></div>
<div class="a" style="left:26.00px;top:429.85px;width:86.60px;height:0.70px;background:#626262;"></div>
<div class="a" style="left:26.00px;top:442.05px;width:86.60px;height:0.70px;background:#626262;"></div>
<div class="a" style="left:113.20px;top:365.80px;width:596.60px;height:4.70px;background:#fa8a12;"></div>
<div class="a" style="left:137.20px;top:365.80px;width:107.60px;height:4.70px;background:#14ea46;"></div>
<div class="a" style="left:119.70px;top:366.40px;width:0.60px;height:3.80px;background:#f8c27a;"></div>
<div class="a" style="left:265.50px;top:366.40px;width:0.60px;height:3.80px;background:#f8c27a;"></div>
<div class="a" style="left:371.50px;top:366.40px;width:0.60px;height:3.80px;background:#f8c27a;"></div>
<div class="a" style="left:374.50px;top:366.40px;width:0.60px;height:3.80px;background:#f8c27a;"></div>
<div class="a" style="left:512.40px;top:366.40px;width:0.60px;height:3.80px;background:#f8c27a;"></div>
<div class="a" style="left:650.20px;top:366.40px;width:0.60px;height:3.80px;background:#f8c27a;"></div>
<div class="a" style="left:136.80px;top:366.00px;width:0.80px;height:4.60px;background:#f4e060;"></div>
<div class="a" style="left:244.40px;top:366.00px;width:0.80px;height:4.60px;background:#f4e060;"></div>
<span class="t" style="left:145.90px;top:356.11px;font-size:5.50px;transform:scaleX(0.8780);color:#d2d2d2;">1s</span>
<span class="t" style="left:181.10px;top:356.11px;font-size:5.50px;transform:scaleX(0.8780);color:#d2d2d2;">2s</span>
<span class="t" style="left:216.30px;top:356.11px;font-size:5.50px;transform:scaleX(0.8780);color:#d2d2d2;">3s</span>
<span class="t" style="left:251.50px;top:356.11px;font-size:5.50px;transform:scaleX(0.8780);color:#d2d2d2;">4s</span>
<span class="t" style="left:286.70px;top:356.11px;font-size:5.50px;transform:scaleX(0.8780);color:#d2d2d2;">5s</span>
<span class="t" style="left:321.90px;top:356.11px;font-size:5.50px;transform:scaleX(0.8780);color:#d2d2d2;">6s</span>
<span class="t" style="left:357.10px;top:356.11px;font-size:5.50px;transform:scaleX(0.8780);color:#d2d2d2;">7s</span>
<span class="t" style="left:392.30px;top:356.11px;font-size:5.50px;transform:scaleX(0.8780);color:#d2d2d2;">8s</span>
<span class="t" style="left:427.50px;top:356.11px;font-size:5.50px;transform:scaleX(0.8780);color:#d2d2d2;">9s</span>
<span class="t" style="left:461.10px;top:356.11px;font-size:5.50px;transform:scaleX(0.9472);color:#d2d2d2;">10s</span>
<span class="t" style="left:496.30px;top:356.11px;font-size:5.50px;transform:scaleX(0.9929);color:#d2d2d2;">11s</span>
<span class="t" style="left:531.50px;top:356.11px;font-size:5.50px;transform:scaleX(0.9472);color:#d2d2d2;">12s</span>
<span class="t" style="left:566.70px;top:356.11px;font-size:5.50px;transform:scaleX(0.9472);color:#d2d2d2;">13s</span>
<span class="t" style="left:601.90px;top:356.11px;font-size:5.50px;transform:scaleX(0.9472);color:#d2d2d2;">14s</span>
<span class="t" style="left:637.10px;top:356.11px;font-size:5.50px;transform:scaleX(0.9472);color:#d2d2d2;">15s</span>
<span class="t" style="left:672.30px;top:356.11px;font-size:5.50px;transform:scaleX(0.9472);color:#d2d2d2;">16s</span>
<div class="a" style="left:112.80px;top:364.00px;width:597.00px;height:1.40px;background:repeating-linear-gradient(90deg,#747474 0,#747474 1px,rgba(0,0,0,0) 1px,rgba(0,0,0,0) 3.52px);"></div>
<div class="a" style="left:148.00px;top:362.80px;width:1.00px;height:2.60px;background:#7e7e7e;"></div>
<div class="a" style="left:183.20px;top:362.80px;width:1.00px;height:2.60px;background:#7e7e7e;"></div>
<div class="a" style="left:218.40px;top:362.80px;width:1.00px;height:2.60px;background:#7e7e7e;"></div>
<div class="a" style="left:253.60px;top:362.80px;width:1.00px;height:2.60px;background:#7e7e7e;"></div>
<div class="a" style="left:288.80px;top:362.80px;width:1.00px;height:2.60px;background:#7e7e7e;"></div>
<div class="a" style="left:324.00px;top:362.80px;width:1.00px;height:2.60px;background:#7e7e7e;"></div>
<div class="a" style="left:359.20px;top:362.80px;width:1.00px;height:2.60px;background:#7e7e7e;"></div>
<div class="a" style="left:394.40px;top:362.80px;width:1.00px;height:2.60px;background:#7e7e7e;"></div>
<div class="a" style="left:429.60px;top:362.80px;width:1.00px;height:2.60px;background:#7e7e7e;"></div>
<div class="a" style="left:464.80px;top:362.80px;width:1.00px;height:2.60px;background:#7e7e7e;"></div>
<div class="a" style="left:500.00px;top:362.80px;width:1.00px;height:2.60px;background:#7e7e7e;"></div>
<div class="a" style="left:535.20px;top:362.80px;width:1.00px;height:2.60px;background:#7e7e7e;"></div>
<div class="a" style="left:570.40px;top:362.80px;width:1.00px;height:2.60px;background:#7e7e7e;"></div>
<div class="a" style="left:605.60px;top:362.80px;width:1.00px;height:2.60px;background:#7e7e7e;"></div>
<div class="a" style="left:640.80px;top:362.80px;width:1.00px;height:2.60px;background:#7e7e7e;"></div>
<div class="a" style="left:676.00px;top:362.80px;width:1.00px;height:2.60px;background:#7e7e7e;"></div>
<svg class="a" style="left:30.00px;top:356.60px;" width="6.4" height="3.4" viewBox="0 0 6.4 3.4"><path d="M0 3.4 L1.8 1.2 L3 2.2 L4.4 0.4 L6.4 3.4Z" fill="#cfcfcf"/></svg>
<div class="a" style="left:40.00px;top:356.70px;width:28.40px;height:3.00px;background:#6e6e6e;border-radius:0.6px"></div>
<div class="a" style="left:53.00px;top:354.60px;width:2.60px;height:7.00px;background:#f4f4f4;border-radius:1px"></div>
<svg class="a" style="left:71.40px;top:355.00px;" width="9.6" height="5" viewBox="0 0 9.6 5"><path d="M0 5 L2.6 1.6 L4.2 3 L6.4 0.2 L9.6 5Z" fill="#cfcfcf"/></svg>
<svg class="a" style="left:103.00px;top:354.80px;" width="6.6" height="7.6" viewBox="0 0 6.6 7.6"><rect x="0" y="3.2" width="6.6" height="4.4" rx="0.6" fill="#f0f0f0"/><path d="M1.4 3.4 V2.4 A1.9 1.9 0 0 1 5.2 2.4 V3.4" stroke="#f0f0f0" stroke-width="1" fill="none"/><rect x="2.9" y="4.6" width="0.8" height="1.6" fill="#555"/></svg>
<div class="a" style="left:104.6px;top:366.7px;width:3.4px;height:3.4px;border-radius:50%;background:#fff"></div>
<div class="a" style="left:104.8px;top:375px;width:3px;height:3px;border-radius:50%;background:#777"></div>
<span class="t" style="left:33.80px;top:371.61px;font-size:6.40px;transform:scaleX(0.9730);color:#d4d4d4;">Cursors</span>
<span class="t" style="left:59.40px;top:384.31px;font-size:6.40px;transform:scaleX(0.9347);color:#d4d4d4;">Eyes</span>
<span class="t" style="left:59.40px;top:396.61px;font-size:6.40px;transform:scaleX(0.9477);color:#d4d4d4;">Head</span>
<span class="t" style="left:59.40px;top:408.61px;font-size:6.40px;transform:scaleX(0.9347);color:#d4d4d4;">Audio</span>
<span class="t" style="left:59.40px;top:420.61px;font-size:6.40px;transform:scaleX(0.9570);color:#d4d4d4;">Animations</span>
<span class="t" style="left:33.80px;top:432.61px;font-size:6.40px;transform:scaleX(1.0047);color:#d4d4d4;">Objects</span>
<svg class="a" style="left:102.00px;top:433.60px;" width="7.6" height="5.8" viewBox="0 0 7.6 5.8"><path d="M3.8 0 L6 2.2 L4.7 2.2 L4.7 3.8 L2.9 3.8 L2.9 2.2 L1.6 2.2Z M0 4 H7.6 V5.8 H0Z" fill="#ececec"/></svg>
<svg class="a" style="left:31.3px;top:385.1px" width="20" height="43" viewBox="-12 0 24 51.6"><ellipse cx="0" cy="8.6" rx="6.7" ry="5.9" fill="#f6f6f6"/><path d="M-1 13 L1 13 L1.4 14.6 L4.2 15.6 L4.8 19 L5.2 21.4 L3.6 22.4 L2.8 23.4 L3.4 26.6 L4 30 L3.6 34.6 L2.4 34.8 L2.2 40 L1.6 45 L2 48 L3 49.2 L0.6 49.3 L0.5 44 L0.3 36 L-0.3 36 L-0.5 44 L-0.6 49.3 L-3 49.2 L-2 48 L-1.6 45 L-2.2 40 L-2.4 34.8 L-3.6 34.6 L-4 30 L-3.4 26.6 L-2.8 23.4 L-3.6 22.4 L-5.2 21.4 L-4.8 19 L-4.2 15.6 L-1.4 14.6Z" fill="#f6f6f6"/></svg>
<div class="a" style="left:229.60px;top:372.30px;width:37.20px;height:7.50px;background:#4f4f4f;"></div>
<svg class="a" style="left:231.80px;top:373.20px;" width="4" height="6" viewBox="0 0 4 6"><path d="M0 0 L3.8 3.4 L2.3 3.5 L3.2 5.4 L2.4 5.8 L1.5 3.9 L0 5Z" fill="#fff"/></svg>
<span class="t" style="left:236.60px;top:373.03px;font-size:5.40px;transform:scaleX(0.8657);color:#eee;">1</span>
<div class="a" style="left:624.70px;top:372.30px;width:33.10px;height:7.50px;background:#4f4f4f;"></div>
<svg class="a" style="left:626.90px;top:373.20px;" width="4" height="6" viewBox="0 0 4 6"><path d="M0 0 L3.8 3.4 L2.3 3.5 L3.2 5.4 L2.4 5.8 L1.5 3.9 L0 5Z" fill="#fff"/></svg>
<span class="t" style="left:631.70px;top:373.03px;font-size:5.40px;transform:scaleX(0.8657);color:#eee;">3</span>
<div class="a" style="left:146.00px;top:394.30px;width:120.50px;height:10.60px;background:#96e2e2;"></div>
<div class="a" style="left:281.00px;top:394.30px;width:17.00px;height:10.60px;background:#96e2e2;"></div>
<div class="a" style="left:670.40px;top:394.30px;width:17.20px;height:10.60px;background:#96e2e2;"></div>
<svg class="a" style="left:128px;top:394.3px" width="20" height="10.6" viewBox="0 0 20 10.6"><path d="M0 0 H17.4 V3.6 L19.2 5.3 L17.4 7 V10.6 H0Z" fill="#0c6a9c"/></svg>
<svg class="a" style="left:130.60px;top:396.00px;" width="7" height="7.6" viewBox="0 0 7 7.6"><path d="M3.6 0.2 C5.6 0.2 6.8 1.6 6.8 3.4 C6.8 5 5.8 6 4.6 6.2 L4.4 7.4 L1.8 7.4 L2.2 5.6 C1.4 5.6 0.8 5.2 0.8 4.6 L0.2 4.2 L0.8 3.2 C0.8 1.4 1.8 0.2 3.6 0.2Z" fill="#fff" transform=""/></svg>
<div class="a" style="left:266.50px;top:394.30px;width:14.70px;height:10.60px;background:#0f8c8c;"></div>
<svg class="a" style="left:270.35px;top:396.00px;" width="7" height="7.6" viewBox="0 0 7 7.6"><path d="M3.6 0.2 C5.6 0.2 6.8 1.6 6.8 3.4 C6.8 5 5.8 6 4.6 6.2 L4.4 7.4 L1.8 7.4 L2.2 5.6 C1.4 5.6 0.8 5.2 0.8 4.6 L0.2 4.2 L0.8 3.2 C0.8 1.4 1.8 0.2 3.6 0.2Z" fill="#fff" transform=""/></svg>
<div class="a" style="left:297.90px;top:394.30px;width:13.90px;height:10.60px;background:#0f8c8c;"></div>
<svg class="a" style="left:301.35px;top:396.00px;" width="7" height="7.6" viewBox="0 0 7 7.6"><path d="M3.6 0.2 C5.6 0.2 6.8 1.6 6.8 3.4 C6.8 5 5.8 6 4.6 6.2 L4.4 7.4 L1.8 7.4 L2.2 5.6 C1.4 5.6 0.8 5.2 0.8 4.6 L0.2 4.2 L0.8 3.2 C0.8 1.4 1.8 0.2 3.6 0.2Z" fill="#fff" transform=""/></svg>
<div class="a" style="left:657.80px;top:394.30px;width:12.60px;height:10.60px;background:#0f8c8c;"></div>
<svg class="a" style="left:660.60px;top:396.00px;" width="7" height="7.6" viewBox="0 0 7 7.6"><path d="M3.6 0.2 C5.6 0.2 6.8 1.6 6.8 3.4 C6.8 5 5.8 6 4.6 6.2 L4.4 7.4 L1.8 7.4 L2.2 5.6 C1.4 5.6 0.8 5.2 0.8 4.6 L0.2 4.2 L0.8 3.2 C0.8 1.4 1.8 0.2 3.6 0.2Z" fill="#fff" transform=""/></svg>
<div class="a" style="left:687.60px;top:394.30px;width:14.90px;height:10.60px;background:#0f8c8c;"></div>
<svg class="a" style="left:691.55px;top:396.00px;" width="7" height="7.6" viewBox="0 0 7 7.6"><path d="M3.6 0.2 C5.6 0.2 6.8 1.6 6.8 3.4 C6.8 5 5.8 6 4.6 6.2 L4.4 7.4 L1.8 7.4 L2.2 5.6 C1.4 5.6 0.8 5.2 0.8 4.6 L0.2 4.2 L0.8 3.2 C0.8 1.4 1.8 0.2 3.6 0.2Z" fill="#fff" transform=""/></svg>
<div class="a" style="left:240.30px;top:411.10px;width:57.10px;height:0.60px;background:#0f8c8c;"></div>
<div class="a" style="left:240.00px;top:408.40px;width:0.60px;height:5.80px;background:#0f8c8c;"></div>
<div class="a" style="left:297.10px;top:408.40px;width:0.60px;height:5.80px;background:#0f8c8c;"></div>
<div class="a" style="left:243.0px;top:409.6px;width:5.0px;height:3.6px;background:#0f8c8c;border-radius:50%"></div>
<div class="a" style="left:249.5px;top:410.4px;width:3.0px;height:2.0px;background:#0f8c8c;border-radius:50%"></div>
<div class="a" style="left:256.0px;top:409.7px;width:5.0px;height:3.4px;background:#0f8c8c;border-radius:50%"></div>
<div class="a" style="left:262.0px;top:410.4px;width:4.0px;height:2.0px;background:#0f8c8c;border-radius:50%"></div>
<div class="a" style="left:268.0px;top:410.6px;width:5.0px;height:1.6px;background:#0f8c8c;border-radius:50%"></div>
<div class="a" style="left:634.00px;top:411.10px;width:57.60px;height:0.60px;background:#0f8c8c;"></div>
<div class="a" style="left:633.70px;top:408.40px;width:0.60px;height:5.80px;background:#0f8c8c;"></div>
<div class="a" style="left:691.30px;top:408.40px;width:0.60px;height:5.80px;background:#0f8c8c;"></div>
<div class="a" style="left:637.0px;top:409.9px;width:4.0px;height:3.0px;background:#0f8c8c;border-radius:50%"></div>
<div class="a" style="left:643.0px;top:409.6px;width:4.0px;height:3.6px;background:#0f8c8c;border-radius:50%"></div>
<div class="a" style="left:649.5px;top:409.9px;width:5.0px;height:3.0px;background:#0f8c8c;border-radius:50%"></div>
<div class="a" style="left:656.0px;top:409.7px;width:4.0px;height:3.4px;background:#0f8c8c;border-radius:50%"></div>
<div class="a" style="left:662.0px;top:410.6px;width:4.0px;height:1.6px;background:#0f8c8c;border-radius:50%"></div>
<div class="a" style="left:389.50px;top:411.00px;width:60.50px;height:1.00px;background:#0f8c8c;"></div>
<div class="a" style="left:389.20px;top:408.40px;width:0.70px;height:6.00px;background:#0f8c8c;"></div>
<div class="a" style="left:392.0px;top:409.3px;width:6.0px;height:4.4px;background:#0f8c8c;border-radius:40%"></div>
<div class="a" style="left:399.5px;top:409.8px;width:4.0px;height:3.4px;background:#0f8c8c;border-radius:40%"></div>
<div class="a" style="left:405.0px;top:409.2px;width:6.0px;height:4.6px;background:#0f8c8c;border-radius:40%"></div>
<div class="a" style="left:413.0px;top:409.7px;width:5.0px;height:3.6px;background:#0f8c8c;border-radius:40%"></div>
<div class="a" style="left:419.5px;top:409.4px;width:5.0px;height:4.2px;background:#0f8c8c;border-radius:40%"></div>
<div class="a" style="left:426.0px;top:409.8px;width:6.0px;height:3.4px;background:#0f8c8c;border-radius:40%"></div>
<div class="a" style="left:434.0px;top:409.5px;width:6.0px;height:4.0px;background:#0f8c8c;border-radius:40%"></div>
<div class="a" style="left:442.0px;top:409.9px;width:6.0px;height:3.2px;background:#0f8c8c;border-radius:40%"></div>
<div class="a" style="left:138.00px;top:419.00px;width:90.40px;height:10.40px;background:#0f8c8c;"></div>
<svg class="a" style="left:140.40px;top:420.80px;" width="6.6" height="7" viewBox="0 0 6.6 7"><path d="M0 2.4 L1.8 3.8 L0 5.2Z" fill="#fff"/><circle cx="4.4" cy="1.2" r="1.2" fill="#fff"/><path d="M3.4 2.6 H5.4 L5.8 5 H5.2 V7 H3.6 V5 H3Z" fill="#fff"/></svg>
<span class="t" style="left:149.30px;top:420.39px;font-size:6.50px;transform:scaleX(0.9857);color:#fff;">Forward</span>
<div class="a" style="left:311.80px;top:419.00px;width:59.20px;height:10.40px;background:#0f8c8c;"></div>
<svg class="a" style="left:314.20px;top:420.80px;" width="5.4" height="7" viewBox="0 0 5.4 7"><circle cx="2.2" cy="1.2" r="1.2" fill="#fff"/><path d="M1.2 2.6 H3.2 L5.2 1 L5.4 1.8 L3.4 3.8 V7 H1.4 V5 H0.8Z" fill="#fff"/></svg>
<span class="t" style="left:323.30px;top:420.39px;font-size:6.50px;transform:scaleX(0.9410);color:#fff;">Select</span>
<div class="a" style="left:452.90px;top:419.00px;width:59.10px;height:10.40px;background:#0f8c8c;"></div>
<svg class="a" style="left:455.30px;top:420.80px;" width="5.4" height="7" viewBox="0 0 5.4 7"><circle cx="2.2" cy="1.2" r="1.2" fill="#fff"/><path d="M1.2 2.6 H3.2 L5.2 1 L5.4 1.8 L3.4 3.8 V7 H1.4 V5 H0.8Z" fill="#fff"/></svg>
<span class="t" style="left:464.40px;top:420.39px;font-size:6.50px;transform:scaleX(0.9410);color:#fff;">Select</span>
<div class="a" style="left:512.80px;top:419.00px;width:110.90px;height:10.40px;background:#0f8c8c;"></div>
<svg class="a" style="left:515.20px;top:420.80px;" width="6.6" height="7" viewBox="0 0 6.6 7"><path d="M0 2.4 L1.8 3.8 L0 5.2Z" fill="#fff"/><circle cx="4.4" cy="1.2" r="1.2" fill="#fff"/><path d="M3.4 2.6 H5.4 L5.8 5 H5.2 V7 H3.6 V5 H3Z" fill="#fff"/></svg>
<span class="t" style="left:524.10px;top:420.39px;font-size:6.50px;transform:scaleX(0.9857);color:#fff;">Forward</span>
<div class="a" style="left:512.20px;top:419.00px;width:0.70px;height:10.40px;background:#d8f0f0;"></div>
<div class="a" style="left:702.50px;top:419.00px;width:7.30px;height:10.40px;background:#0f8c8c;"></div>
<svg class="a" style="left:704.90px;top:420.80px;" width="5.4" height="7" viewBox="0 0 5.4 7"><circle cx="2.2" cy="1.2" r="1.2" fill="#fff"/><path d="M1.2 2.6 H3.2 L5.2 1 L5.4 1.8 L3.4 3.8 V7 H1.4 V5 H0.8Z" fill="#fff"/></svg>
<div class="a" style="left:171.00px;top:352.00px;width:1.00px;height:116.80px;background:rgba(215,30,30,0.72);"></div>
<svg class="a" style="left:168.8px;top:351px" width="5.2" height="12.8" viewBox="0 0 5.2 12.8"><path d="M0.6 0 H4.6 Q5.2 0 5.2 0.6 V9.6 L2.6 12.8 L0 9.6 V0.6 Q0 0 0.6 0Z" fill="#e32626" stroke="#fff" stroke-width="0.5"/></svg>
<svg class="a" style="left:176.00px;top:351.00px;" width="9.4" height="3.6" viewBox="0 0 9.4 3.6"><path d="M1.6 0.3 H9 V3.3 H1.6 L0.2 1.8Z" fill="#666" stroke="#eee" stroke-width="0.6"/></svg>
<div class="a" style="left:709.80px;top:365.60px;width:10.20px;height:103.20px;background:#e9e9e9;"></div>
<div class="a" style="left:710.80px;top:376.30px;width:8.00px;height:65.30px;background:linear-gradient(90deg,#f8f8f8,#e2e2e2);border:0.6px solid #a8a8a8;border-radius:2px"></div>
<div class="a" style="left:712.60px;top:407.00px;width:4.40px;height:0.60px;background:#888;"></div>
<div class="a" style="left:712.60px;top:408.40px;width:4.40px;height:0.60px;background:#888;"></div>
<div class="a" style="left:712.60px;top:409.80px;width:4.40px;height:0.60px;background:#888;"></div>
<svg class="a" style="left:712.80px;top:369.40px;" width="4" height="2.6" viewBox="0 0 4 2.6"><path d="M0.2 2.4 L2 0.2 L3.8 2.4Z" fill="#333"/></svg>
<svg class="a" style="left:712.80px;top:462.60px;" width="4" height="2.6" viewBox="0 0 4 2.6"><path d="M0.2 0.2 L2 2.4 L3.8 0.2Z" fill="#333"/></svg>
<div class="a" style="left:25.60px;top:468.80px;width:694.40px;height:11.20px;background:#f1f1f1;"></div>
<div class="a" style="left:25.60px;top:468.80px;width:694.40px;height:0.50px;background:#d6d6d6;"></div>
<div class="a" style="left:30.40px;top:471.40px;width:4.00px;height:4.00px;background:#2a2a2a;"></div>
<div class="a" style="left:32.60px;top:473.60px;width:4.20px;height:4.20px;background:#9a9a9a;"></div>
<div class="a" style="left:43.00px;top:471.40px;width:4.00px;height:4.00px;background:#2ec43e;"></div>
<div class="a" style="left:45.20px;top:473.60px;width:4.20px;height:4.20px;background:#9a9a9a;"></div>
<div class="a" style="left:39.50px;top:470.20px;width:0.60px;height:8.80px;background:#d0d0d0;"></div>
<div class="a" style="left:52.10px;top:470.20px;width:0.60px;height:8.80px;background:#d0d0d0;"></div>
<div class="a" style="left:112.10px;top:470.20px;width:0.60px;height:8.80px;background:#d0d0d0;"></div>
<div class="a" style="left:308.70px;top:470.20px;width:0.60px;height:8.80px;background:#d0d0d0;"></div>
<div class="a" style="left:324.30px;top:470.20px;width:0.60px;height:8.80px;background:#d0d0d0;"></div>
<svg class="a" style="left:56.00px;top:471.40px;" width="6.4" height="6.8" viewBox="0 0 6.4 6.8"><path d="M1 0 V3.4 A2.2 2.2 0 0 0 5.4 3.4 V0" stroke="#1c1c1c" stroke-width="1.7" fill="none"/></svg>
<svg class="a" style="left:117.80px;top:471.60px;" width="6.8" height="6.2" viewBox="0 0 6.8 6.2"><rect x="0" y="0" width="1.8" height="6.2" fill="#555"/><rect x="2.4" y="0" width="4.4" height="6.2" fill="#333"/></svg>
<span class="t" style="left:128.30px;top:470.87px;font-size:6.60px;transform:scaleX(0.9330);color:#222;">(none)</span>
<svg class="a" style="left:179.40px;top:472.40px;" width="4.4" height="5.2" viewBox="0 0 4.4 5.2"><path d="M0.4 0.4 L2.2 2 L4 0.4 M0.4 2.9 L2.2 4.5 L4 2.9" stroke="#333" stroke-width="1.1" fill="none"/></svg>
<span class="t" style="left:194.40px;top:471.07px;font-size:6.60px;transform:scaleX(0.9877);color:#222;">00:19.500</span>
<svg class="a" style="left:313.00px;top:471.20px;" width="8" height="7.4" viewBox="0 0 8 7.4"><path d="M1 5 V3.8 A3 3 0 0 1 7 3.8 V5" stroke="#222" stroke-width="0.9" fill="none"/><rect x="0.4" y="4.2" width="2" height="3" rx="0.6" fill="#222"/><rect x="5.6" y="4.2" width="2" height="3" rx="0.6" fill="#222"/></svg>
<div class="a" style="left:325.00px;top:469.30px;width:384.80px;height:10.70px;background:#ececec;"></div>
<div class="a" style="left:336.40px;top:470.20px;width:232.40px;height:9.00px;background:linear-gradient(#f8f8f8,#dedede);border:0.6px solid #a8a8a8;border-radius:2px"></div>
<div class="a" style="left:451.20px;top:472.40px;width:0.60px;height:4.60px;background:#888;"></div>
<div class="a" style="left:452.60px;top:472.40px;width:0.60px;height:4.60px;background:#888;"></div>
<div class="a" style="left:454.00px;top:472.40px;width:0.60px;height:4.60px;background:#888;"></div>
<svg class="a" style="left:328.80px;top:472.80px;" width="2.8" height="4" viewBox="0 0 2.8 4"><path d="M2.6 0.2 L0.2 2 L2.6 3.8Z" fill="#333"/></svg>
<svg class="a" style="left:702.60px;top:472.80px;" width="2.8" height="4" viewBox="0 0 2.8 4"><path d="M0.2 0.2 L2.6 2 L0.2 3.8Z" fill="#333"/></svg>
<div class="a" style="left:378.90px;top:329.60px;width:100.10px;height:79.80px;background:#f1f1f1;border:0.6px solid #a0a0a0;box-shadow:1.4px 1.4px 0.8px rgba(40,40,40,0.7),2px 2px 2.5px rgba(0,0,0,0.3)"></div>
<div class="a" style="left:380.20px;top:395.60px;width:98.00px;height:12.00px;background:linear-gradient(#eef4fc,#e3ecf9);border:1px solid #c6daf3;border-radius:1.2px"></div>
<span class="t" style="left:399.80px;top:332.82px;font-size:6.80px;transform:scaleX(1.1140);color:#1a1a1a;">Auto-Text</span>
<span class="t" style="left:399.80px;top:345.82px;font-size:6.80px;transform:scaleX(1.1050);color:#1a1a1a;">Auto-Highlight</span>
<span class="t" style="left:399.80px;top:358.82px;font-size:6.80px;transform:scaleX(1.0737);color:#1a1a1a;">Auto-Interact</span>
<span class="t" style="left:399.80px;top:371.82px;font-size:6.80px;transform:scaleX(1.0822);color:#1a1a1a;">Auto-Zoom</span>
<span class="t" style="left:399.80px;top:384.82px;font-size:6.80px;transform:scaleX(1.0637);color:#1a1a1a;">Auto-Rotate</span>
<span class="t" style="left:399.80px;top:397.82px;font-size:6.80px;transform:scaleX(1.0825);color:#1a1a1a;">Auto-Animate</span>
<svg class="a" style="left:464.00px;top:401.00px;" width="9.6" height="15.6" viewBox="0 0 9.6 15.6"><path d="M0.5 0.5 L0.5 12 L3.2 9.6 L5.4 14.6 L7.4 13.8 L5.2 8.8 L8.8 8.8Z" fill="#fff" stroke="#111" stroke-width="0.8" stroke-linejoin="round"/></svg>
</div></body></html>
